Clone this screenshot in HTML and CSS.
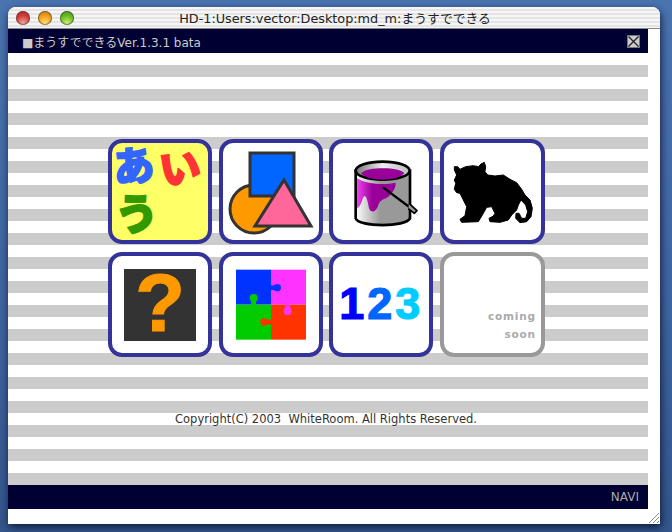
FILE: index.html
```html
<!DOCTYPE html>
<html lang="ja">
<head>
    <meta charset="UTF-8">
    <title>まうすでできる</title>
    <link rel="stylesheet" href="styles.css">
</head>
<body>
    <div class="window">
        <div class="titlebar">
            <div class="lights">
                <span class="light red"></span>
                <span class="light orange"></span>
                <span class="light green"></span>
            </div>
            <div class="title">HD-1:Users:vector:Desktop:md_m:まうすでできる</div>
        </div>

        <div class="pane">
            <div class="band head">
                <span>■まうすでできるVer.1.3.1 bata</span>
                <svg class="close" width="13" height="13" viewBox="0 0 13 13">
                    <rect x="0.5" y="0.5" width="12" height="12" fill="#ccc" stroke="#777"/>
                    <path d="M1.5 1.5 L11.5 11.5 M11.5 1.5 L1.5 11.5" stroke="#222" stroke-width="1.3"/>
                </svg>
            </div>

            <div class="stripes">
                <div class="menu">
                    <!-- hiragana -->
                    <a class="tile yellow" href="#">
                        <svg class="pic" viewBox="112 143 96 97">
                            <text class="kana" x="113" y="181" font-size="41" fill="#3366ff" stroke="#3366ff" transform="rotate(-6 134 165)">あ</text>
                            <text class="kana" x="159" y="183" font-size="41" fill="#ff3333" stroke="#ff3333" transform="rotate(-8 180 165)">い</text>
                            <text class="kana" x="115" y="230" font-size="43" fill="#339900" stroke="#339900" transform="rotate(-6 136 213)">う</text>
                        </svg>
                    </a>
                    <!-- shapes -->
                    <a class="tile" href="#">
                        <svg class="pic" viewBox="223 143 96 97">
                            <g stroke="#333" stroke-width="3" stroke-linejoin="miter">
                                <circle cx="254" cy="209" r="24" fill="#ff9900"/>
                                <rect x="250" y="153" width="44" height="43" fill="#0066ff"/>
                                <path d="M284 180 L311 226 L255 226 Z" fill="#ff6699"/>
                            </g>
                        </svg>
                    </a>
                    <!-- paint bucket -->
                    <a class="tile" href="#">
                        <svg class="pic" viewBox="-36 -21 288 291">
                            <defs>
                                <linearGradient id="can" x1="0" x2="1" y1="0" y2="0">
                                    <stop offset="0" stop-color="#fff"/>
                                    <stop offset="0.45" stop-color="#999"/>
                                    <stop offset="1" stop-color="#999"/>
                                </linearGradient>
                                <linearGradient id="inner" x1="0" x2="1" y1="0" y2="0">
                                    <stop offset="0" stop-color="#777"/>
                                    <stop offset="0.5" stop-color="#eee"/>
                                    <stop offset="1" stop-color="#bbb"/>
                                </linearGradient>
                                <linearGradient id="drip" x1="0" x2="1" y1="0" y2="0">
                                    <stop offset="0" stop-color="#ee44ee"/>
                                    <stop offset="0.4" stop-color="#990099"/>
                                </linearGradient>
                            </defs>
                            <path d="M32 62 V205 C40 232 185 232 195 205 V62 Z" fill="url(#can)" stroke="#000" stroke-width="8"/>
                            <path d="M36 85 C70 105 120 105 152 98 C152 115 145 125 130 140 C118 148 105 148 100 165 C95 185 78 192 72 175 C68 155 66 140 58 138 C52 140 50 170 36 175 Z" fill="url(#drip)"/>
                            <ellipse cx="113" cy="62" rx="81" ry="27" fill="url(#inner)" stroke="#000" stroke-width="8"/>
                            <path d="M48 70 C60 58 85 55 115 55 C145 55 170 60 178 70 C165 84 140 89 113 89 C85 89 60 84 48 70 Z" fill="#990099"/>
                            <path d="M115 113 L205 180" stroke="#000" stroke-width="7" stroke-linecap="round"/>
                            <path d="M192 160 L216 182 L208 190 L190 176" fill="#999" stroke="#000" stroke-width="5" stroke-linejoin="round"/>
                        </svg>
                    </a>
                    <!-- tiger cub -->
                    <a class="tile" href="#">
                        <svg class="pic" viewBox="-3 -21 288 291">
                            <path class="tiger" d="M28 50 L38 50 L45 58 L62 50 L85 47 L100 50 L108 42 L118 37 L122 50 L120 65 L128 75 L150 78 L175 75 L195 88 L215 98 L230 118 L240 135 L255 150 L262 175 L258 200 L245 215 L225 218 L212 205 L213 190 L222 190 L230 205 L242 205 L248 185 L242 165 L228 150 L220 165 L215 180 L200 195 L190 210 L165 217 L135 215 L132 205 L145 198 L150 190 L140 170 L125 172 L112 195 L100 215 L50 217 L45 208 L60 197 L65 170 L55 150 L45 130 L35 128 L28 118 L32 100 L28 90 L35 75 L28 60 Z"/>
                        </svg>
                    </a>
                    <!-- question -->
                    <a class="tile" href="#">
                        <div class="question">?</div>
                    </a>
                    <!-- puzzle -->
                    <a class="tile" href="#">
                        <svg class="pic" viewBox="-21 -18 288 291">
                            <rect x="18" y="23" width="105" height="105" fill="#0033ff"/>
                            <rect x="123" y="23" width="105" height="105" fill="#ff33ff"/>
                            <rect x="18" y="128" width="105" height="105" fill="#00cc00"/>
                            <rect x="123" y="128" width="105" height="105" fill="#ff3300"/>
                            <path d="M120 70 H135 V84 H120 Z" fill="#0033ff"/>
                            <circle cx="142" cy="77" r="11" fill="#0033ff"/>
                            <path d="M64 112 H78 V131 H64 Z" fill="#00cc00"/>
                            <circle cx="71" cy="108" r="12" fill="#00cc00"/>
                            <path d="M166 125 H180 V143 H166 Z" fill="#ff33ff"/>
                            <circle cx="173" cy="147" r="12" fill="#ff33ff"/>
                            <path d="M108 173 H126 V187 H108 Z" fill="#ff3300"/>
                            <circle cx="102" cy="180" r="11" fill="#ff3300"/>
                        </svg>
                    </a>
                    <!-- numbers -->
                    <a class="tile" href="#">
                        <div class="numbers"><span class="n1">1</span><span class="n2">2</span><span class="n3">3</span></div>
                    </a>
                    <div class="tile off">
                        <div class="soon">coming<br>soon</div>
                    </div>
                </div>
                <div class="copyright">Copyright(C) 2003&nbsp; WhiteRoom. All Rights Reserved.</div>
            </div>

            <div class="band foot">NAVI</div>
        </div>

        <div class="grip-row">
            <svg class="grip" width="12" height="15" viewBox="0 0 12 15">
                <path d="M1 14 L11 4 M5 14 L11 8 M9 14 L11 12" stroke="#888" stroke-width="1"/>
            </svg>
        </div>
    </div>
</body>
</html>
```

FILE: styles.css
```css
body {
    margin: 0;
    padding: 7px 12px 8px 8px;
    height: 532px;
    box-sizing: border-box;
    overflow: hidden;
    background: linear-gradient(#4a74b0, #3d659f 60%, #33568c);
    font-family: "DejaVu Sans", "Noto Sans CJK JP", sans-serif;
}
.window {
    width: 652px;
    height: 517px;
    background: white;
    border-radius: 8px 8px 0 0;
    box-shadow: 1px 3px 9px rgba(0, 0, 30, 0.75);
}
.titlebar {
    height: 21px;
    display: flex;
    align-items: center;
    border-bottom: 1px solid #888;
    border-radius: 8px 8px 0 0;
    background: repeating-linear-gradient(#f6f6f6 0 2px, #e4e4e4 2px 4px);
}
.lights {
    display: flex;
    gap: 8px;
    padding-left: 8px;
    width: 70px;
    flex-shrink: 0;
}
.light {
    width: 14px;
    height: 14px;
    border-radius: 50%;
    box-shadow: inset 0 0 0 1px rgba(60, 60, 60, 0.55);
}
.red {
    background: radial-gradient(circle at 50% 85%, #f0a29a, #d03a34 55%, #a02c28);
}
.orange {
    background: radial-gradient(circle at 50% 85%, #ffe070, #f09a18 55%, #b07418);
}
.green {
    background: radial-gradient(circle at 50% 85%, #c8f070, #66b820 55%, #468420);
}
.title {
    flex: 1;
    padding-right: 76px;
    text-align: center;
    font-size: 12.8px;
    color: #222;
    white-space: nowrap;
}
.pane {
    width: 640px;
}
.band {
    height: 24px;
    background: #000033;
    color: #ccc;
    font-size: 12px;
    display: flex;
    align-items: center;
}
.head {
    justify-content: space-between;
    padding: 0 8px 0 14px;
}
.foot {
    justify-content: flex-end;
    padding-right: 9px;
    color: #aaa;
}
.stripes {
    height: 432px;
    box-sizing: border-box;
    padding-top: 86px;
    background: repeating-linear-gradient(#fff 0 12px, #ccc 12px 24px);
}
.menu {
    display: grid;
    grid-template-columns: 104px 104px 104px 105px;
    grid-auto-rows: 105px;
    column-gap: 6.6px;
    row-gap: 8px;
    padding-left: 100px;
}
.tile {
    display: flex;
    box-sizing: border-box;
    border: 4px solid #333399;
    border-radius: 14px;
    background: white;
    text-decoration: none;
}
.yellow {
    background: #ffff66;
}
.off {
    border-color: #999;
}
.pic {
    width: 96px;
    height: 97px;
    display: block;
    overflow: visible;
}
.kana {
    font-family: "Noto Sans CJK JP", sans-serif;
    font-weight: 900;
    stroke-width: 1.6;
    stroke-linejoin: round;
}
.tiger {
    fill: #000;
    stroke: #000;
    stroke-width: 3;
    stroke-linejoin: round;
}
.question {
    width: 72px;
    height: 72px;
    margin: auto;
    background: #333;
    color: #ff9900;
    font-family: "Liberation Sans", sans-serif;
    font-weight: bold;
    font-size: 82px;
    line-height: 68px;
    text-align: center;
    -webkit-text-stroke: 1px #ff9900;
}
.numbers {
    margin: auto;
    padding-bottom: 2px;
    font-family: "Liberation Sans", sans-serif;
    font-weight: bold;
    font-size: 45px;
    letter-spacing: 3px;
    -webkit-text-stroke: 1.2px;
}
.n1 {
    color: #0000ff;
}
.n2 {
    color: #0066ff;
}
.n3 {
    color: #00ccff;
}
.soon {
    margin: auto 5px 10px auto;
    text-align: right;
    color: #aaa;
    font-size: 10.5px;
    font-weight: bold;
    line-height: 18px;
    letter-spacing: 0.8px;
}
.copyright {
    margin-top: 54px;
    padding-right: 4px;
    text-align: center;
    font-size: 11.5px;
    line-height: 16px;
    color: #333;
}
.grip-row {
    height: 15px;
    display: flex;
    justify-content: flex-end;
}
```
